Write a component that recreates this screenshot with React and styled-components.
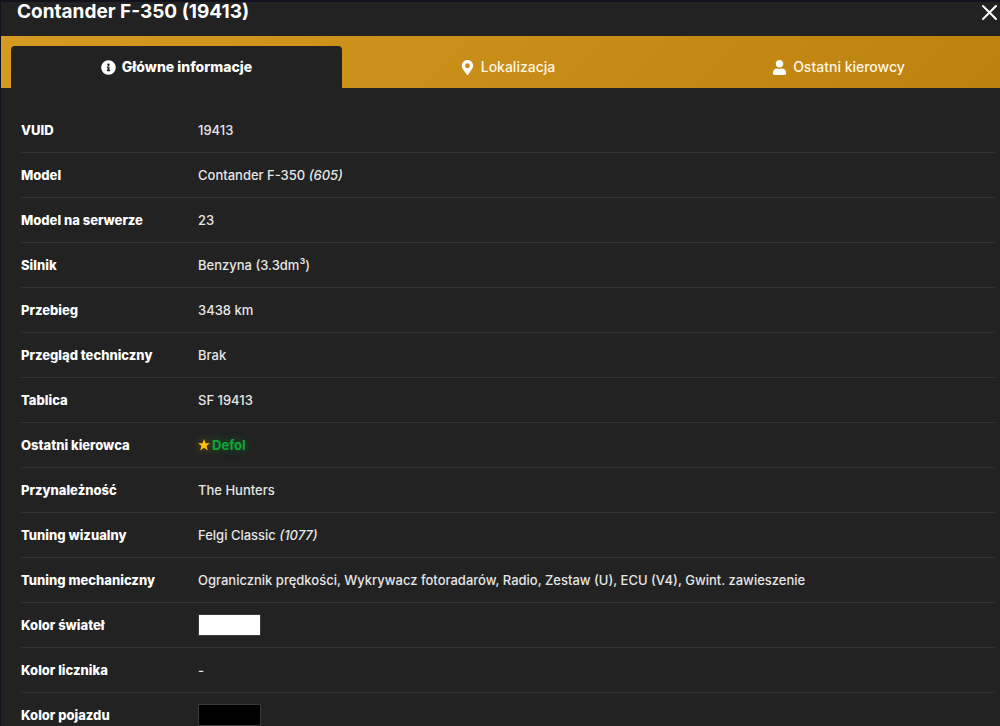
import React from "react";
import styled, { createGlobalStyle } from "styled-components";
import { FaInfoCircle, FaMapMarkerAlt, FaUser } from "react-icons/fa";

const GlobalStyle = createGlobalStyle`
  *, *::before, *::after { box-sizing: border-box; }
  body {
    margin: 0;
    background: #12111c;
    color: #e6e6e6;
    font: 500 13px/20px Inter, "Liberation Sans", sans-serif;
  }
`;

const Page = styled.div`
  height: 100vh;
  padding: 2px 0 0 1px;
  overflow: hidden;
`;

const Dialog = styled.main`
  min-height: 100%;
  background: #222222;
`;

const Header = styled.header`
  display: flex;
  align-items: center;
  justify-content: space-between;
  height: 34px;
  padding: 0 2px 14px 16px;
`;

const Title = styled.h1`
  margin: 0;
  color: #ffffff;
  font-size: 19px;
  font-weight: 700;
  line-height: 20px;
`;

const CloseButton = styled.button`
  display: flex;
  padding: 0;
  border: 0;
  background: none;
  color: #ffffff;
  cursor: pointer;
`;

const TabBar = styled.nav`
  overflow: hidden;
  background: linear-gradient(135deg, #d49a22, #bd810e);
`;

const TabList = styled.div`
  display: grid;
  grid-template-columns: repeat(3, 1fr);
  margin-right: -4px;
  padding: 10px 0 0 10px;
`;

const Tab = styled.button`
  display: flex;
  align-items: center;
  justify-content: center;
  gap: 6px;
  height: 42px;
  padding: 0;
  border: 0;
  border-radius: 4px 4px 0 0;
  background: ${(p) => (p.$active ? "#222222" : "transparent")};
  color: ${(p) => (p.$active ? "#ffffff" : "#fff6e2")};
  font: inherit;
  font-size: 14px;
  font-weight: ${(p) => (p.$active ? 800 : 500)};
  cursor: pointer;

  svg { color: #ffffff; }
`;

const Panel = styled.section`
  padding: 20px 5px 0 20px;
`;

const Details = styled.table`
  width: 100%;
  border-spacing: 0;
  table-layout: fixed;
`;

const Label = styled.th`
  width: 177px;
  height: 45px;
  padding: 0;
  border-bottom: 1px solid #343434;
  color: #ffffff;
  font-weight: 800;
  text-align: left;
`;

const Value = styled.td`
  padding: 0;
  border-bottom: 1px solid #343434;
`;

const Driver = styled.a`
  display: flex;
  align-items: center;
  gap: 2px;
  color: #0fa638;
  font-weight: 700;
  text-decoration: none;
  text-shadow: 0 0 10px #0fa63899;

  svg {
    color: #ffc107;
    filter: drop-shadow(0 0 4px #ffc10766);
  }
`;

const Swatch = styled.div`
  width: 63px;
  height: 22px;
  border: 1px solid #3a3a3a;
  background: ${(p) => p.$color};
`;

const Star = () => (
  <svg width="12" height="12" viewBox="0 0 22 22" fill="currentColor" aria-hidden="true">
    <path d="M11 0L13.9 7.6H22L15.6 12.7L18 21L11 16.2L4 21L6.4 12.7L0 7.6H8.1Z" />
  </svg>
);

const tabs = [
  { name: "Główne informacje", Icon: FaInfoCircle },
  { name: "Lokalizacja", Icon: FaMapMarkerAlt },
  { name: "Ostatni kierowcy", Icon: FaUser },
];

const details = [
  ["VUID", "19413"],
  ["Model", <>Contander F-350 <em>(605)</em></>],
  ["Model na serwerze", "23"],
  ["Silnik", "Benzyna (3.3dm³)"],
  ["Przebieg", "3438 km"],
  ["Przegląd techniczny", "Brak"],
  ["Tablica", "SF 19413"],
  ["Ostatni kierowca", <Driver href="#defol"><Star />Defol</Driver>],
  ["Przynależność", "The Hunters"],
  ["Tuning wizualny", <>Felgi Classic <em>(1077)</em></>],
  ["Tuning mechaniczny", "Ogranicznik prędkości, Wykrywacz fotoradarów, Radio, Zestaw (U), ECU (V4), Gwint. zawieszenie"],
  ["Kolor świateł", <Swatch $color="#ffffff" />],
  ["Kolor licznika", "-"],
  ["Kolor pojazdu", <Swatch $color="#000000" />],
];

export default function App() {
  const [active, setActive] = React.useState(0);
  return (
    <Page>
      <GlobalStyle />
      <Dialog>
        <Header>
          <Title>Contander F-350 (19413)</Title>
          <CloseButton type="button" aria-label="Zamknij">
            <svg width="17" height="17" viewBox="0 0 17 17" fill="none" stroke="currentColor" strokeWidth="2" strokeLinecap="round">
              <path d="M2 2L15 15M15 2L2 15" />
            </svg>
          </CloseButton>
        </Header>
        <TabBar>
          <TabList role="tablist">
            {tabs.map(({ name, Icon }, i) => (
              <Tab key={name} type="button" role="tab" aria-selected={i === active} $active={i === active} onClick={() => setActive(i)}>
                <Icon size={15} />
                {name}
              </Tab>
            ))}
          </TabList>
        </TabBar>
        <Panel>
          <Details>
            <tbody>
              {details.map(([label, value]) => (
                <tr key={label}>
                  <Label scope="row">{label}</Label>
                  <Value>{value}</Value>
                </tr>
              ))}
            </tbody>
          </Details>
        </Panel>
      </Dialog>
    </Page>
  );
}
